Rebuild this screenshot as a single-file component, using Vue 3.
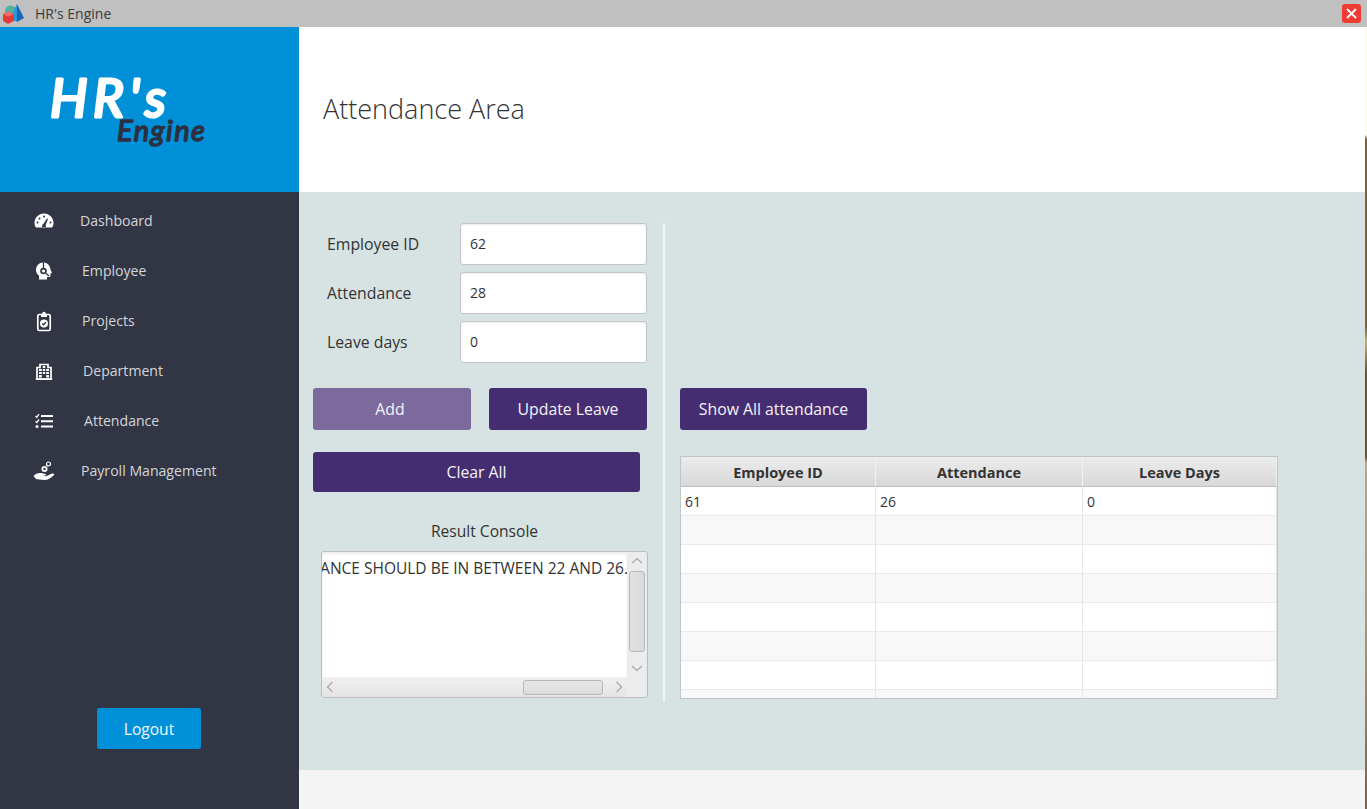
<script setup>
const navItems = [
  { label: 'Dashboard', indent: 80, icon: 'gauge' },
  { label: 'Employee', indent: 82, icon: 'head' },
  { label: 'Projects', indent: 82, icon: 'clipboard' },
  { label: 'Department', indent: 83, icon: 'building' },
  { label: 'Attendance', indent: 84, icon: 'tasks' },
  { label: 'Payroll Management', indent: 81, icon: 'hand' },
]

const fields = [
  { label: 'Employee ID', value: '62' },
  { label: 'Attendance', value: '28' },
  { label: 'Leave days', value: '0' },
]

const rows = [['61', '26', '0'], ['', '', ''], ['', '', ''], ['', '', ''], ['', '', ''], ['', '', ''], ['', '', ''], ['', '', '']]
</script>

<template>
  <div class="window">
    <div class="titlebar">
      <svg class="app-icon" width="24" height="22" viewBox="0 0 24 22">
        <circle cx="9.500" cy="8" r="5.500" fill="#4fb3a0" />
        <path d="M16 1 L23 15 L16 19 Z" fill="#1769b5" />
        <path d="M16 1 L9 15 L16 19 Z" fill="#2f93e0" />
        <path d="M2 11 L7 8.500 L13 11 L13 18 L7 21 L2 18 Z" fill="#e23a36" />
        <path d="M2 11 L7 13.500 L13 11 L7 8.500 Z" fill="#f0706a" />
      </svg>
      <span class="app-name">HR's Engine</span>
      <button class="close-btn">
        <svg width="11" height="11" viewBox="0 0 11 11"><path d="M1 1 L10 10 M10 1 L1 10" stroke="#fff" stroke-width="1.800" /></svg>
      </button>
    </div>

    <div class="body">
      <aside class="sidebar">
        <div class="logo">
          <svg width="299" height="165" viewBox="0 0 299 165">
            <text x="50" y="90" textLength="116" class="logo-hr">HR's</text>
            <text x="117" y="114" textLength="88" class="logo-engine">Engine</text>
          </svg>
        </div>
        <nav class="nav">
          <div v-for="item in navItems" :key="item.label" class="nav-item">
            <svg class="nav-icon" width="24" height="24" viewBox="0 0 24 24">
              <template v-if="item.icon === 'gauge'">
                <path fill-rule="evenodd" fill="#fff" d="M12 4.500 C6.600 4.500 2.500 8.800 2.500 14 C2.500 15.900 3 17.400 3.900 18.500 L20.100 18.500 C21 17.400 21.500 15.900 21.500 14 C21.500 8.800 17.400 4.500 12 4.500 Z M10.300 16 A2 2 0 1 0 13.700 16 L16 10 L15 9.600 L11.700 14.500 Z" />
                <circle cx="12" cy="7.500" r="1" fill="#323544" />
                <circle cx="7.500" cy="9.500" r="1" fill="#323544" />
                <circle cx="5.500" cy="13.500" r="1" fill="#323544" />
                <circle cx="18.500" cy="13.500" r="1" fill="#323544" />
              </template>
              <template v-else-if="item.icon === 'head'">
                <path fill="#fff" d="M11.500 3.500 C7 3.500 4 7 4 11 C4 13.500 5.200 15.300 7 16.500 L7 20.500 L15 20.500 L15 18 L17 18 C18 18 18.500 17.300 18.500 16.500 L18.500 14.500 L20 14 L18.500 10.500 C18 6.500 15.500 3.500 11.500 3.500 Z" />
                <circle cx="11.500" cy="12" r="3.300" fill="#323544" />
                <circle cx="11.500" cy="12" r="1.600" fill="#fff" />
                <path d="M11.500 3.500 L11.500 9 M14 14.500 L17 17" stroke="#323544" stroke-width="1.300" />
              </template>
              <template v-else-if="item.icon === 'clipboard'">
                <rect x="5.800" y="5.500" width="12.400" height="16" rx="1.500" fill="none" stroke="#fff" stroke-width="1.700" />
                <path fill="#fff" d="M9 5.500 L10 5.500 C10 4 11 2.800 12 2.800 C13 2.800 14 4 14 5.500 L15 5.500 L15 8 L9 8 Z" />
                <circle cx="12" cy="14.500" r="4" fill="#fff" />
                <path d="M10.200 14.500 L11.500 15.800 L13.900 13.200" fill="none" stroke="#323544" stroke-width="1.300" />
              </template>
              <template v-else-if="item.icon === 'building'">
                <path fill="none" stroke="#fff" stroke-width="1.700" d="M5 20 L5 8.500 L8 8.500 L8 5.500 L16 5.500 L16 8.500 L19 8.500 L19 20 Z" />
                <path fill="#fff" d="M3.800 19.500 H20.200 V21 H3.800 Z M7 10 H9.800 V12 H7 Z M10.800 10 H13.200 V12 H10.800 Z M14.200 10 H17 V12 H14.200 Z M7 13 H9.800 V15 H7 Z M10.800 13 H13.200 V15 H10.800 Z M14.200 13 H17 V15 H14.200 Z M7 16 H9.800 V18.500 H7 Z M14.200 16 H17 V18.500 H14.200 Z M10.800 7 H13.200 V9 H10.800 Z" />
              </template>
              <template v-else-if="item.icon === 'tasks'">
                <path fill="#fff" d="M9 6 H21 V8 H9 Z M9 11.200 H21 V13.200 H9 Z M9 16.500 H21 V18.500 H9 Z" />
                <path fill="none" stroke="#fff" stroke-width="1.300" d="M3.500 7 L4.800 8.200 L7 5 M3.500 12.500 L4.800 13.500 L7 10.500" />
                <circle cx="5" cy="17.500" r="1.500" fill="#fff" />
              </template>
              <template v-else>
                <path fill="#fff" d="M1.500 17 C3.500 14.500 6.500 13.600 9 14 L13.500 15 C14.500 15.400 14.300 16.400 13.200 16.400 L10.500 16.400 L14 17.300 L19.500 14.800 C21.500 14 22.800 15.200 22 16 C19.500 18.500 17 20.800 13 21 L7 20.500 L4 20 Z" />
                <circle cx="12.500" cy="10" r="3" fill="#fff" />
                <circle cx="12.500" cy="10" r="1.200" fill="#323544" />
                <circle cx="16.500" cy="5" r="2" fill="none" stroke="#fff" stroke-width="1.200" />
              </template>
            </svg>
            <span class="nav-label" :style="{ left: item.indent + 'px' }">{{ item.label }}</span>
          </div>
        </nav>
        <button class="logout">Logout</button>
      </aside>

      <main class="main">
        <header class="page-head">
          <h1>Attendance Area</h1>
        </header>

        <section class="content">
          <div class="left-col">
            <div class="fields">
              <div v-for="f in fields" :key="f.label" class="field">
                <label>{{ f.label }}</label>
                <div class="input">{{ f.value }}</div>
              </div>
            </div>
            <div class="btn-row">
              <button class="btn btn-faded">Add</button>
              <button class="btn">Update Leave</button>
            </div>
            <button class="btn btn-clear">Clear All</button>
            <div class="console-title">Result Console</div>
            <div class="console">
              <div class="console-text"><span>ATTENDANCE SHOULD BE IN BETWEEN 22 AND 26.</span></div>
              <div class="vbar">
                <svg width="12" height="8" viewBox="0 0 12 8"><path d="M1 6 L6 1.500 L11 6" fill="none" stroke="#a9a9a9" stroke-width="1.300" /></svg>
                <div class="vthumb"></div>
                <svg width="12" height="8" viewBox="0 0 12 8"><path d="M1 2 L6 6.500 L11 2" fill="none" stroke="#a9a9a9" stroke-width="1.300" /></svg>
              </div>
              <div class="hbar">
                <svg width="8" height="12" viewBox="0 0 8 12"><path d="M6.500 1 L1.500 6 L6.500 11" fill="none" stroke="#a9a9a9" stroke-width="1.300" /></svg>
                <div class="hthumb"></div>
                <svg width="8" height="12" viewBox="0 0 8 12"><path d="M1.500 1 L6.500 6 L1.500 11" fill="none" stroke="#a9a9a9" stroke-width="1.300" /></svg>
              </div>
              <div class="corner"></div>
            </div>
          </div>

          <div class="divider"></div>

          <div class="right-col">
            <button class="btn btn-show">Show All attendance</button>
            <div class="table-wrap">
              <table>
                <colgroup>
                  <col class="c1" /><col class="c2" /><col class="c3" />
                </colgroup>
                <thead>
                  <tr><th>Employee ID</th><th>Attendance</th><th>Leave Days</th></tr>
                </thead>
                <tbody>
                  <tr v-for="(row, i) in rows" :key="i">
                    <td v-for="(cell, j) in row" :key="j">{{ cell }}</td>
                  </tr>
                </tbody>
              </table>
            </div>
          </div>
        </section>

        <div class="foot"></div>
      </main>
      <div class="edge"></div>
    </div>
  </div>
</template>

<style scoped>
.window {
  width: 1367px;
  height: 809px;
  display: flex;
  flex-direction: column;
  font-family: "Open Sans", sans-serif;
  color: #333;
  overflow: hidden;
}
.titlebar {
  height: 27px;
  flex: none;
  background: #c0c0c0;
  display: flex;
  align-items: center;
}
.app-icon { margin-left: 1px; }
.app-name { margin-left: 10px; font-size: 14px; color: #3c3c3c; }
.close-btn {
  margin-left: auto;
  margin-right: 6px;
  width: 19px;
  height: 19px;
  padding: 0;
  border: none;
  border-radius: 3px;
  background: #ee3b33;
  display: flex;
  align-items: center;
  justify-content: center;
}

.body { flex: 1; display: flex; min-height: 0; }

.sidebar {
  width: 299px;
  flex: none;
  background: #323544;
  display: flex;
  flex-direction: column;
  align-items: stretch;
}
.logo { height: 165px; background: #0090d8; }
.logo-hr {
  font-family: Lato, sans-serif;
  font-style: italic;
  font-weight: 400;
  font-size: 53px;
  fill: #fff;
  stroke: #fff;
  stroke-width: 3px;
  stroke-linejoin: round;
}
.logo-engine {
  font-family: Lato, sans-serif;
  font-style: italic;
  font-weight: 400;
  font-size: 29px;
  fill: #2c3040;
  stroke: #2c3040;
  stroke-width: 1.500px;
  stroke-linejoin: round;
}
.nav { padding-top: 4px; }
.nav-item {
  height: 50px;
  display: flex;
  align-items: center;
  position: relative;
}
.nav-icon { margin-left: 32px; }
.nav-label {
  position: absolute;
  top: 50%;
  margin-top: -1px;
  transform: translateY(-50%);
  font-size: 14.100px;
  color: #d3d5da;
  white-space: nowrap;
}
.logout {
  margin: auto 0 60px 97px;
  width: 104px;
  height: 41px;
  border: none;
  border-radius: 2px;
  background: #0090d8;
  color: #f4f8fb;
  font: 15.600px "Open Sans", sans-serif;
}

.main { flex: 1; display: flex; flex-direction: column; min-width: 0; }
.page-head {
  height: 165px;
  flex: none;
  background: #fff;
  display: flex;
  align-items: center;
  padding-left: 24px;
  padding-bottom: 2px;
  box-sizing: border-box;
}
.page-head h1 {
  margin: 0;
  font-size: 27px;
  font-weight: 300;
  color: #333;
}

.content {
  height: 578px;
  flex: none;
  background: #d7e3e3;
  display: flex;
  align-items: flex-start;
  padding: 31px 0 0 14px;
  box-sizing: border-box;
}
.foot { flex: 1; background: #f4f4f4; }

.left-col { width: 335px; flex: none; }
.fields { display: flex; flex-direction: column; gap: 7px; padding-left: 14px; }
.field { display: flex; align-items: center; }
.field label { width: 133px; font-size: 15.800px; color: #333; }
.input {
  width: 187px;
  height: 42px;
  box-sizing: border-box;
  background: #fff;
  border: 1px solid #c4c4c4;
  border-radius: 3px;
  box-shadow: inset 0 1px 2px rgba(0,0,0,.08);
  padding-left: 9px;
  line-height: 40px;
  font-size: 14px;
  color: #333;
}
.btn {
  height: 42px;
  border: none;
  border-radius: 3px;
  background: #452d72;
  color: #f5f3f8;
  font: 15.800px "Open Sans", sans-serif;
  padding: 0;
}
.btn-row { display: flex; gap: 18px; margin-top: 25px; }
.btn-row .btn { width: 158px; }
.btn-row .btn-faded { background: #7d6a9c; padding-right: 4px; }
.btn-clear { display: block; width: 327px; height: 40px; margin-top: 22px; }
.console-title {
  margin-top: 29px;
  padding-left: 8px;
  width: 327px;
  text-align: center;
  font-size: 15.600px;
  color: #333;
  line-height: 21px;
}
.console {
  margin: 9px 0 0 8px;
  width: 327px;
  height: 147px;
  box-sizing: border-box;
  border: 1px solid #bdbdbd;
  border-radius: 3px;
  background: #ececec;
  display: grid;
  grid-template-columns: 305px 1fr;
  grid-template-rows: 125px 1fr;
  overflow: hidden;
}
.console-text {
  background: #fff;
  box-shadow: inset 0 2px 3px rgba(0,0,0,.07);
  overflow: hidden;
  display: flex;
  justify-content: flex-end;
  padding-top: 6px;
  font-size: 15.500px;
  line-height: 21px;
  white-space: nowrap;
  color: #333;
}
.console-text span { flex: none; margin-right: -1px; }
.vbar {
  display: flex;
  flex-direction: column;
  align-items: center;
  justify-content: space-between;
  padding: 5px 0 5px;
}
.vthumb {
  width: 16px;
  height: 81px;
  margin-bottom: 6px;
  box-sizing: border-box;
  border: 1px solid #b7b7b7;
  border-radius: 3px;
  background: linear-gradient(to right, #e2e2e2, #d9d9d9);
}
.hbar {
  display: flex;
  align-items: center;
  padding: 0 4px;
  background: linear-gradient(#f0f0f0, #e4e4e4);
}
.hthumb {
  width: 80px;
  height: 15px;
  margin: 0 12px 0 auto;
  box-sizing: border-box;
  border: 1px solid #b7b7b7;
  border-radius: 3px;
  background: linear-gradient(#e6e6e6, #dcdcdc);
}

.divider {
  width: 2px;
  height: 479px;
  flex: none;
  margin-left: 15px;
  background: #eef3f3;
}

.right-col { margin-left: 15px; padding-top: 165px; }
.btn-show { display: block; width: 187px; }
.table-wrap {
  margin-top: 26px;
  width: 598px;
  height: 243px;
  box-sizing: border-box;
  border: 1px solid #c2c5c5;
  background: #fff;
  overflow: hidden;
}
table {
  width: 596px;
  table-layout: fixed;
  border-collapse: separate;
  border-spacing: 0;
  font-size: 14px;
}
.c1 { width: 195px; }
.c2 { width: 207px; }
.c3 { width: 194px; }
th {
  height: 30px;
  padding: 2px 0 0;
  font-size: 14.500px;
  font-weight: 700;
  color: #333;
  background: linear-gradient(#ececec, #d8d8d8);
  border-right: 1px solid #f2f2f2;
  border-bottom: 1px solid #bfbfbf;
  box-sizing: border-box;
}
td {
  height: 29px;
  padding: 0 0 0 4px;
  box-sizing: border-box;
  border-right: 1px solid #e6e6e6;
  border-bottom: 1px solid #eaeaea;
  color: #333;
}
tbody tr:nth-child(even) td { background: #f8f8f8; }

.edge {
  width: 2px;
  flex: none;
  background: linear-gradient(#fdf8e8 0, #fdf8e8 108px, #7a6238 112px, #7a6238 300px, #c4b06a 315px, #6a5530 345px, #6a5530 430px, #bfa485 436px, #a98c6c 640px, #7d5f44 782px);
}
</style>

<style>
html, body { margin: 0; overflow: hidden; }
</style>
